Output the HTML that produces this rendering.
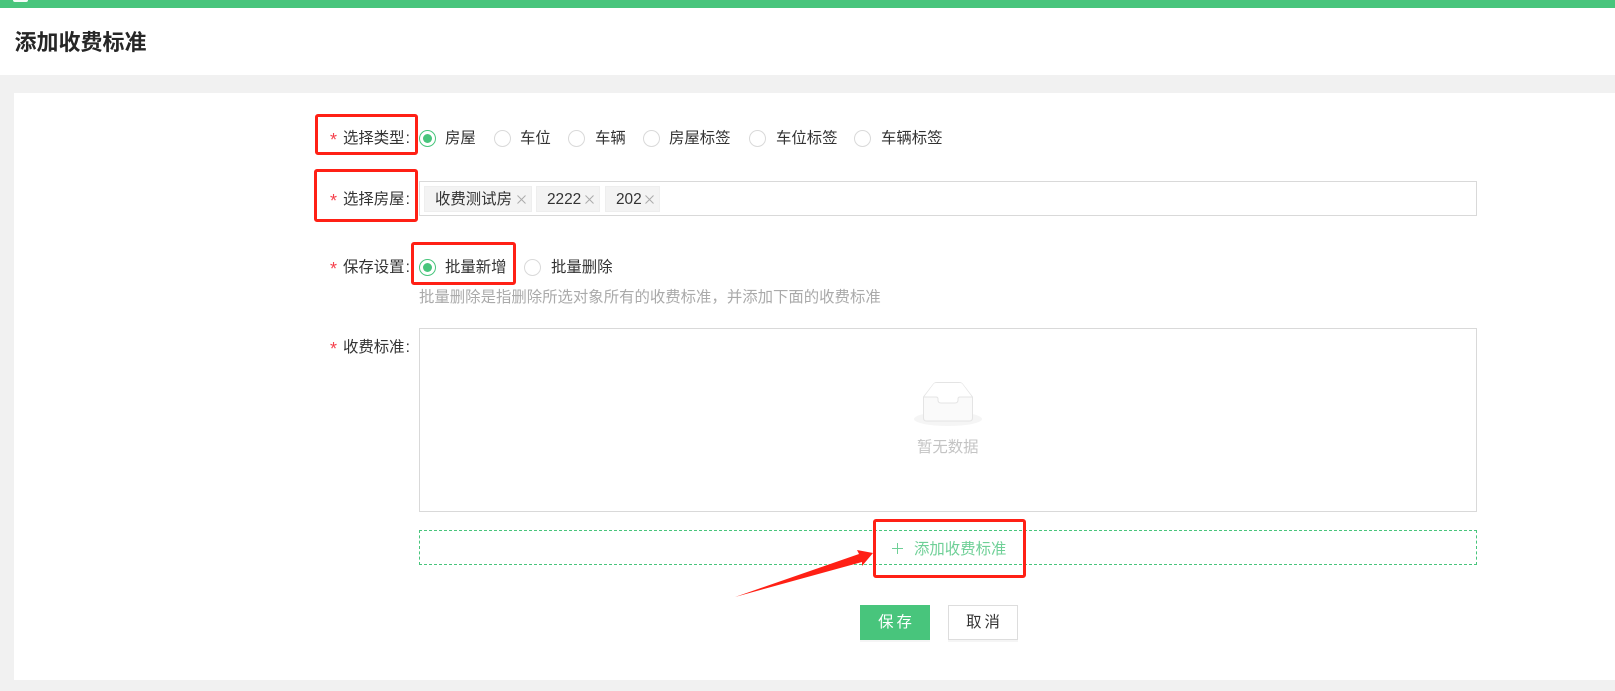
<!DOCTYPE html>
<html lang="zh"><head><meta charset="utf-8"><style>
html,body{margin:0;padding:0;width:1615px;height:691px;overflow:hidden;background:#fff}
body{position:relative;font-family:"Liberation Sans","Noto Sans CJK SC",sans-serif;font-size:15.4px;color:#333}
.a{position:absolute;white-space:nowrap;line-height:20px}
.r{position:absolute;width:15px;height:15px;border:1px solid #d9d9d9;border-radius:50%;background:#fff}
.r.on{border-color:#48c57c}
.r.on:after{content:"";position:absolute;left:3px;top:3px;width:9px;height:9px;border-radius:50%;background:#48c57c}
.s{position:absolute;left:330px;color:#f5414d;font-size:18px;line-height:20px}
.t{position:absolute;top:186px;height:24px;background:#f3f3f3;border:1px solid #eee;line-height:26px;white-space:nowrap}
.x{position:absolute;top:8px;width:9px;height:9px}
.box{position:absolute;border:3px solid #ff2015;border-radius:3px;box-sizing:border-box}
</style></head><body>
<div class="a" style="left:0;top:0;width:1615px;height:8px;background:#48c57c"></div>
<div class="a" style="left:13px;top:0;width:15px;height:2px;background:#f4fbf7;border-radius:0 0 8px 8px"></div>
<div class="a" style="left:14.500px;top:30px;font-size:22px;line-height:26px;font-weight:bold;color:#262626">添加收费标准</div>
<div class="a" style="left:0;top:75px;width:1615px;height:18px;background:#f1f1f1"></div>
<div class="a" style="left:0;top:93px;width:14px;height:598px;background:#f1f1f1"></div>
<div class="a" style="left:0;top:680px;width:1615px;height:11px;background:#f1f1f1"></div>

<div class="s" style="top:130px">*</div>
<div class="a" style="left:343px;top:129px">选择类型<span style="margin-left:1px">:</span></div>
<div class="r on" style="left:419px;top:130px"></div><div class="a" style="left:445px;top:129px">房屋</div>
<div class="r" style="left:494px;top:130px"></div><div class="a" style="left:520px;top:129px">车位</div>
<div class="r" style="left:568px;top:130px"></div><div class="a" style="left:595px;top:129px">车辆</div>
<div class="r" style="left:643px;top:130px"></div><div class="a" style="left:669px;top:129px">房屋标签</div>
<div class="r" style="left:749px;top:130px"></div><div class="a" style="left:776px;top:129px">车位标签</div>
<div class="r" style="left:854px;top:130px"></div><div class="a" style="left:881px;top:129px">车辆标签</div>

<div class="s" style="top:191px">*</div>
<div class="a" style="left:343px;top:190px">选择房屋<span style="margin-left:1px">:</span></div>
<div class="a" style="left:419px;top:181px;width:1058px;height:35px;border:1px solid #d9d9d9;box-sizing:border-box"></div>
<div class="t" style="left:424px;width:106px"><span style="position:absolute;left:10px">收费测试房</span><svg class="x" style="left:92px" viewBox="0 0 9 9"><path d="M.5 .5L8.500 8.500M8.500 .5L.5 8.500" stroke="#aaa" fill="none"/></svg></div>
<div class="t" style="left:536px;width:62px"><span style="position:absolute;left:10px">2222</span><svg class="x" style="left:48px" viewBox="0 0 9 9"><path d="M.5 .5L8.500 8.500M8.500 .5L.5 8.500" stroke="#aaa" fill="none"/></svg></div>
<div class="t" style="left:605px;width:53px"><span style="position:absolute;left:10px">202</span><svg class="x" style="left:39px" viewBox="0 0 9 9"><path d="M.5 .5L8.500 8.500M8.500 .5L.5 8.500" stroke="#aaa" fill="none"/></svg></div>

<div class="s" style="top:259px">*</div>
<div class="a" style="left:343px;top:258px">保存设置<span style="margin-left:1px">:</span></div>
<div class="r on" style="left:419px;top:259px"></div><div class="a" style="left:445px;top:258px">批量新增</div>
<div class="r" style="left:524px;top:259px"></div><div class="a" style="left:551px;top:258px">批量删除</div>
<div class="a" style="left:419px;top:288px;color:#aaa">批量删除是指删除所选对象所有的收费标准，并添加下面的收费标准</div>

<div class="s" style="top:339px">*</div>
<div class="a" style="left:343px;top:338px">收费标准<span style="margin-left:1px">:</span></div>
<div class="a" style="left:419px;top:328px;width:1058px;height:184px;border:1px solid #d9d9d9;box-sizing:border-box"></div>
<svg class="a" style="left:910px;top:378px" width="76" height="50" viewBox="0 0 76 50">
<ellipse cx="38" cy="41" rx="34" ry="7" fill="#f5f5f5"/>
<path d="M13.500 19L24 5.500Q25 4.500 27 4.500H49Q51 4.500 52 5.500L62.500 19V40Q62.500 43 59.500 43H16.500Q13.500 43 13.500 40Z" fill="#fafafa" stroke="#e4e4e4" stroke-width="1"/>
<path d="M14 19H26Q28 19 28 21V22Q28 25 31 25H45Q48 25 48 22V21Q48 19 50 19H62L52 5.500Q51 5 49 5H27Q25 5 24 5.500Z" fill="#fff"/>
<path d="M13.500 19H26Q28 19 28 21V22Q28 25 31 25H45Q48 25 48 22V21Q48 19 50 19H62.500" fill="none" stroke="#e4e4e4" stroke-width="1"/>
</svg>
<div class="a" style="left:917px;top:438px;color:#c4c4c4">暂无数据</div>

<div class="a" style="left:419px;top:530px;width:1058px;height:35px;border:1px dashed #48c57c;box-sizing:border-box"></div>
<div class="a" style="left:892px;top:548px;width:11px;height:1px;background:#6fd097"></div>
<div class="a" style="left:897px;top:543px;width:1px;height:11px;background:#6fd097"></div>
<div class="a" style="left:914px;top:540px;color:#6fd097">添加收费标准</div>

<div class="a" style="left:860px;top:605px;width:70px;height:35px;background:#48c57c;color:#fff;text-align:center;line-height:35px;letter-spacing:3px;text-indent:3px;box-shadow:0 2px 0 #f5f5f5">保存</div>
<div class="a" style="left:948px;top:605px;width:70px;height:35px;border:1px solid #ddd;box-sizing:border-box;text-align:center;line-height:33px;letter-spacing:3px;text-indent:3px;box-shadow:0 2px 0 #f5f5f5">取消</div>

<div class="box" style="left:315px;top:114px;width:103px;height:41px"></div>
<div class="box" style="left:314px;top:169px;width:104px;height:53px"></div>
<div class="box" style="left:411px;top:242px;width:105px;height:43px"></div>
<div class="box" style="left:873px;top:519px;width:153px;height:59px"></div>
<svg class="a" style="left:730px;top:545px" width="150" height="55" viewBox="0 0 150 55">
<path d="M5 52L129 9L127 5L143 8L132 21L132 17Z" fill="#ff2015"/>
</svg>
</body></html>
